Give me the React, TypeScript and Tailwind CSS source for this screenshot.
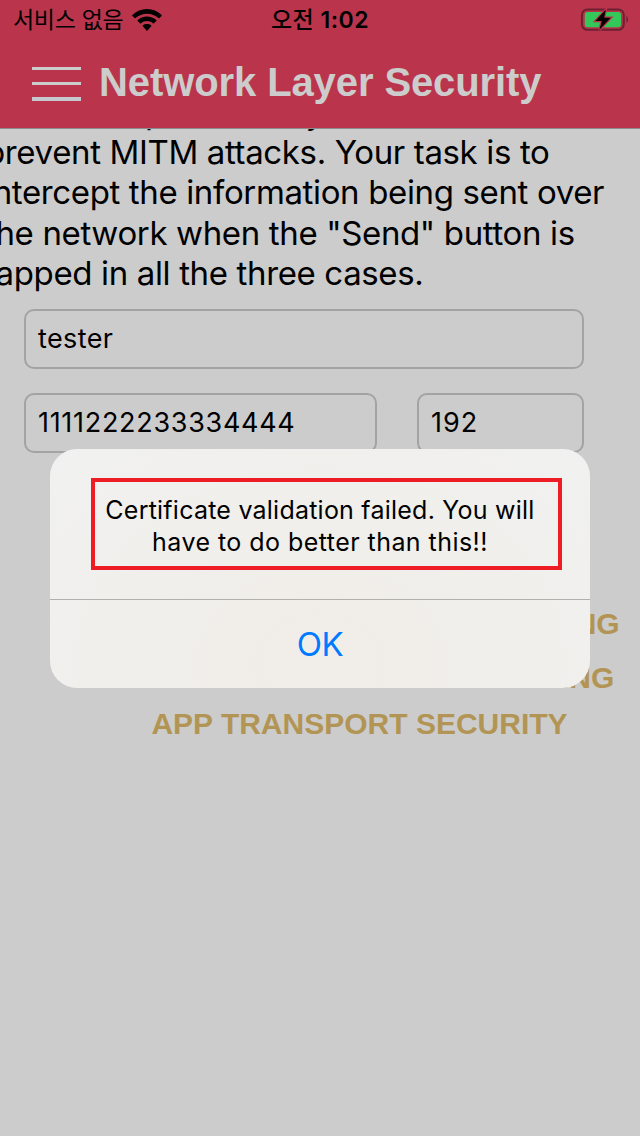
interface FieldProps {
  value: string;
  className: string;
}

interface SendButtonProps {
  label: string;
  className: string;
}

function WifiIcon() {
  return (
    <svg width="30" height="22" viewBox="0 0 30 22" className="ml-[9px]">
      <path d="M15 0C9.4 0 4.2 2.2.4 5.9c-.3.3-.3.7 0 1l2.2 2.2c.3.3.7.3 1 0C6.6 6.3 10.6 4.7 15 4.7s8.4 1.6 11.4 4.4c.3.3.7.3 1 0l2.2-2.2c.3-.3.3-.7 0-1C25.8 2.2 20.6 0 15 0z" />
      <path d="M15 7.5c-3.5 0-6.8 1.3-9.3 3.5-.3.3-.3.7 0 1l2.3 2.3c.3.3.7.3 1 0 1.600-1.400 3.700-2.200 6-2.200s4.400.8 6 2.200c.3.3.7.3 1 0l2.300-2.300c.3-.3.3-.7 0-1C21.800 8.800 18.500 7.500 15 7.500z" />
      <path d="M15 14.9c-1.6 0-3 .5-4.2 1.4-.3.3-.3.7 0 1l3.7 4.2c.3.3.7.3 1 0l3.7-4.2c.3-.3.3-.7 0-1-1.2-.9-2.6-1.4-4.2-1.4z" />
    </svg>
  );
}

function BatteryIcon() {
  return (
    <svg width="48" height="24" viewBox="0 0 48 24">
      <rect x="1.9" y="1.4" width="41.9" height="20.4" rx="5.5" fill="none" stroke="#6e2030" strokeWidth="2" />
      <path d="M46.4 8.1c2.3 1.6 2.3 5 0 6.6z" fill="#6e2030" />
      <rect x="4.8" y="4" width="36.2" height="15.2" rx="3" fill="#34c759" />
      <path d="M25.8 1.6 15.4 13h6.4L19.4 21.8 30.8 9.8h-6.6z" fill="#000" stroke="#ba354c" strokeWidth="2.4" paintOrder="stroke" />
    </svg>
  );
}

function StatusBar() {
  return (
    <div className="grid h-10 grid-cols-[1fr_auto_1fr] items-center font-['Inter','Noto_Sans_CJK_KR',sans-serif] text-black">
      <div className="flex items-center pl-[13px]">
        <span className="text-[23px] leading-10 tracking-[-0.3px]">서비스 없음</span>
        <WifiIcon />
      </div>
      <span className="text-[23px] leading-10 font-semibold tracking-[0.5px]">
        <span className="font-medium">오전</span> 1:02
      </span>
      <div className="flex justify-end pr-3">
        <BatteryIcon />
      </div>
    </div>
  );
}

function Header() {
  return (
    <header className="h-[129px] border-b border-[#8c8c8c] bg-[#ba354c]">
      <StatusBar />
      <div className="flex h-[86px] items-center pl-8">
        <div className="mt-[2px] flex flex-col gap-3">
          <div className="h-[3px] w-[49px] bg-[#cccccc]" />
          <div className="h-[3px] w-[49px] bg-[#cccccc]" />
          <div className="h-1 w-[49px] bg-[#c5c8cc]" />
        </div>
        <h1 className="-mt-[2px] ml-[18px] whitespace-nowrap font-['Liberation_Sans',sans-serif] text-[40px] leading-[44px] font-bold tracking-[-0.1px] text-[#cccccc]">
          Network Layer Security
        </h1>
      </div>
    </header>
  );
}

function Description() {
  return (
    <div className="h-[172px] overflow-hidden">
      <div className="-mt-[37.4px] -ml-[15px] whitespace-nowrap text-[33px] leading-[40.4px] tracking-[-0.36px] text-black">
        <p className="ml-[160px] tracking-[2.3px]">public key</p>
        <p>prevent MITM attacks. Your task is to</p>
        <p>intercept the information being sent over</p>
        <p>the network when the "Send" button is</p>
        <p>tapped in all the three cases.</p>
      </div>
    </div>
  );
}

function Field({ value, className }: FieldProps) {
  return (
    <div className={`flex h-[60px] items-center rounded-[10px] border-2 border-[#a3a3a3] pl-3 text-[27px] text-black ${className}`}>
      {value}
    </div>
  );
}

function SendButton({ label, className }: SendButtonProps) {
  return (
    <button className={`block whitespace-nowrap font-['Liberation_Sans',sans-serif] text-[30px] leading-9 font-bold text-[#b29554] ${className}`}>
      {label}
    </button>
  );
}

function Alert() {
  return (
    <div className="absolute top-[449px] left-[50px] flex h-[239px] w-[540px] flex-col rounded-[27px] bg-radial-[at_50%_90%] from-[#f1ede8] via-[#f0efeb] to-[#f1f1f1] text-center">
      <div className="flex h-[150px] justify-center pt-[29px] pl-[13px]">
        <p className="h-[92px] w-[471px] border-4 border-[#ee1c25] pt-3 pr-[13px] text-[25px] leading-8 whitespace-nowrap text-black">
          <span className="tracking-[0.23px]">Certificate validation failed. You will</span>
          <br />
          <span className="tracking-[0.45px]">have to do better than this!!</span>
        </p>
      </div>
      <button className="flex-1 border-t border-[#b0b0ac] pt-[2px] text-[33px] tracking-[-0.5px] text-[#007aff]">OK</button>
    </div>
  );
}

export default function App() {
  return (
    <div className="relative h-[1136px] w-[640px] overflow-hidden bg-[#cccccc] font-['Inter',sans-serif]">
      <Header />
      <Description />
      <div className="flex flex-col gap-6 pt-2 pl-6">
        <Field value="tester" className="w-[560px] tracking-[0.4px]" />
        <div className="flex gap-10">
          <Field value="1111222233334444" className="w-[353px] tracking-[0.7px]" />
          <Field value="192" className="w-[167px] tracking-[1px]" />
        </div>
      </div>
      <div className="flex w-[719px] flex-col items-center pt-[153px]">
        <SendButton label="SEND USING CERTIFICATE PINNING" className="tracking-[-0.15px]" />
        <SendButton label="SEND USING PUBLIC KEY PINNING" className="mt-[18px]" />
        <SendButton label="APP TRANSPORT SECURITY" className="mt-[10px]" />
      </div>
      <Alert />
    </div>
  );
}
